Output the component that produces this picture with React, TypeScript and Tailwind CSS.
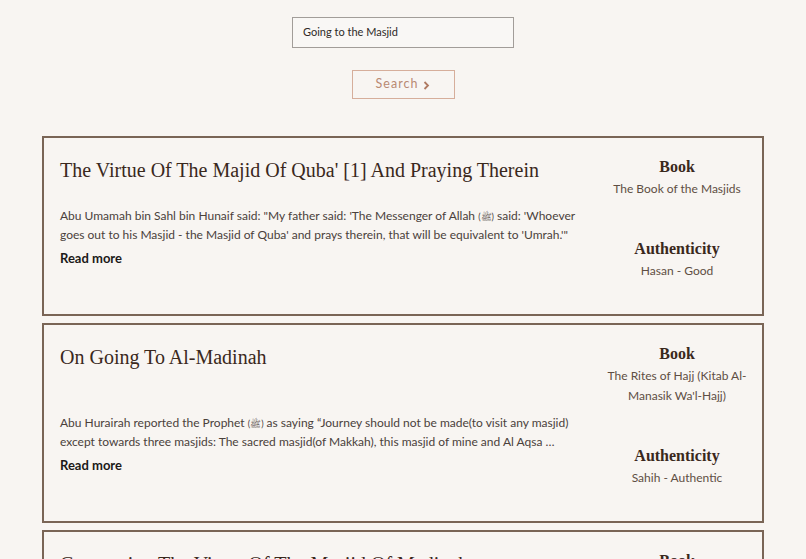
import React from "react";

type Item = {
  title: string;
  body: React.ReactNode;
  book: string;
  auth: string;
};

const Saw = () => <span className="text-[9px]">(ﷺ)</span>;

const items: Item[] = [
  {
    title: "The Virtue Of The Majid Of Quba' [1] And Praying Therein",
    body: (
      <>
        Abu Umamah bin Sahl bin Hunaif said: "My father said: 'The Messenger of Allah <Saw /> said: 'Whoever goes out to his Masjid - the Masjid of Quba' and prays therein, that will be equivalent to 'Umrah.'"
      </>
    ),
    book: "The Book of the Masjids",
    auth: "Hasan - Good",
  },
  {
    title: "On Going To Al-Madinah",
    body: (
      <>
        Abu Hurairah reported the Prophet <Saw /> as saying “Journey should not be made(to visit any masjid) except towards three masjids: The sacred masjid(of Makkah), this masjid of mine and Al Aqsa …
      </>
    ),
    book: "The Rites of Hajj (Kitab Al-Manasik Wa'l-Hajj)",
    auth: "Sahih - Authentic",
  },
  {
    title: "Concerning The Virtue Of The Masjid Of Madinah",
    body: (
      <>
        It was narrated from Abu Hurairah that the Messenger of Allah <Saw /> said: “One prayer in this Masjid of mine is better than a thousand prayers elsewhere.”
      </>
    ),
    book: "The Book of the Masjids",
    auth: "Sahih - Authentic",
  },
];

const serif = { fontFamily: '"Liberation Serif", "DejaVu Serif", serif' };
const sans = { fontFamily: 'Lato, "Noto Sans", sans-serif' };

function Card({ item }: { item: Item }) {
  return (
    <div className="flex border-2 border-[#7a6556] bg-[#f8f5f2]">
      <div className="flex flex-1 flex-col justify-between pl-[16px] pr-[2px] pt-[17px] pb-[47px]">
        <h2 className="text-[20px] leading-[30px] text-[#3a281c]" style={serif}>
          {item.title}
        </h2>
        <div style={sans}>
          <p className="text-[12px] leading-[18px] text-[#4a413b]">{item.body}</p>
          <p className="mt-[5px] text-[13px] leading-[18px] font-bold text-[#1c1a18]">Read more</p>
        </div>
      </div>
      <div className="flex w-[170px] shrink-0 flex-col items-center px-[11px] pt-[17px] pb-[33px] text-center">
        <div className="text-[16px] leading-[24px] font-bold text-[#3a281c]" style={serif}>
          Book
        </div>
        <div className="text-[12px] leading-[20px] text-[#5e4e43]" style={sans}>
          {item.book}
        </div>
        <div className="mt-[38px] text-[16px] leading-[24px] font-bold text-[#3a281c]" style={serif}>
          Authenticity
        </div>
        <div className="text-[12px] leading-[20px] text-[#5e4e43]" style={sans}>
          {item.auth}
        </div>
      </div>
    </div>
  );
}

export default function App() {
  return (
    <div className="h-[559px] overflow-hidden bg-[#f8f5f2] pt-[17px]" style={sans}>
      <div className="flex flex-col items-center">
        <div className="flex h-[31px] w-[222px] items-center border-[1.5px] border-[#a29d99] bg-[#f9f7f5] px-[10px]">
          <span className="text-[11px] text-[#2e2a27]">Going to the Masjid</span>
        </div>
        <button className="mt-[22px] flex h-[29px] w-[103px] items-center justify-center gap-[5px] border border-[#d6ae9b] text-[12.5px] tracking-[1px] text-[#b98a73]">
          <span>Search</span>
          <svg width="7" height="9" viewBox="0 0 7 9" className="mt-[1px]">
            <path d="M1.5 1 L5 4.5 L1.5 8" fill="none" stroke="#b07a62" strokeWidth="1.8" />
          </svg>
        </button>
      </div>
      <div className="mx-auto mt-[37px] flex w-[722px] flex-col gap-[7px]">
        {items.map((it, i) => (
          <Card key={i} item={it} />
        ))}
      </div>
    </div>
  );
}
